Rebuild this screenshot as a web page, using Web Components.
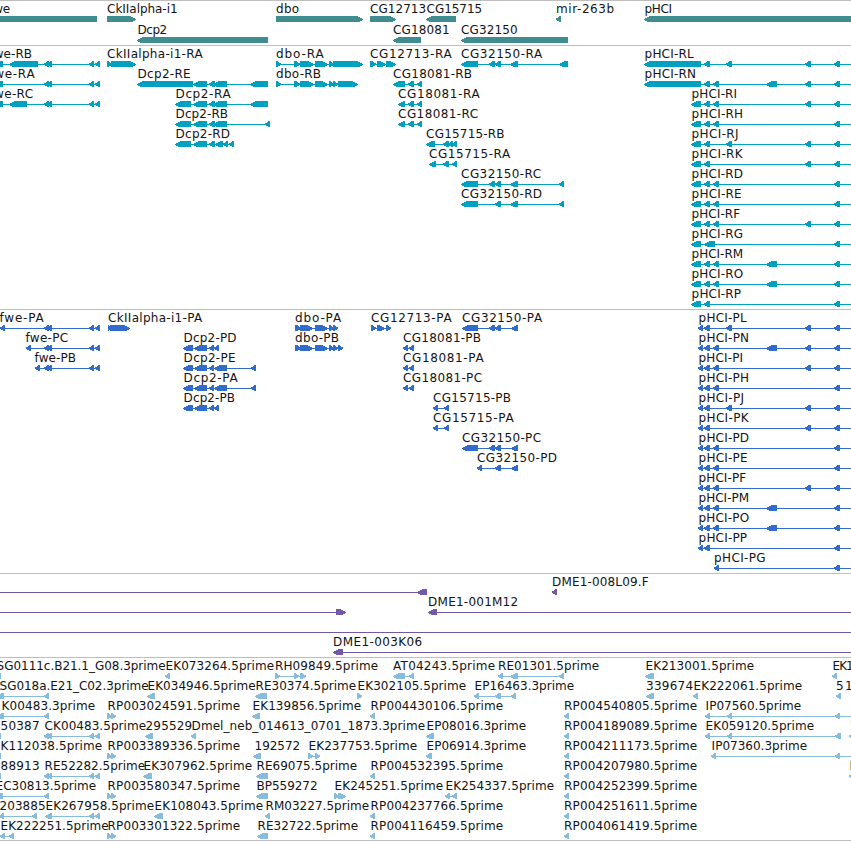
<!DOCTYPE html>
<html lang="en">
<head>
<meta charset="utf-8">
<title>Genome browser</title>
<style>
html,body{margin:0;background:#fff}
body{overflow:hidden}
</style>
</head>
<body>
<genome-view></genome-view>
<script>
// Feature: label|label start|label end|direction + exon spans; "~n" extends the intron line to n.
const CK = '<44-49 47-52 89-94 95-100';
const TRACKS = [
{color:'#408d91', pitch:21, pad:2, rows:[
 'fwe|-10|9.5|<-20-97;CkIIalpha-i1|107.5|177|>107-136;dbo|276.5|298.5|>276-363;CG12713|370.5|425.5|>370-396;CG15715|427|481.5|<426-456;mir-263b|556.5|613.5|<556-561;pHCI|645|671.5|<644-880',
 'Dcp2|138|166.5|<137-268;CG18081|393.5|449|<393-421;CG32150|461.5|517|<461-568']},
{color:'#00a0c0', pitch:20, pad:3, rows:[
 'fwe-RB|-10|31.5|<-5-3 9-38 44-49 47-52 89-94 95-100;CkIIalpha-i1-RA|107.5|202|>107-112 111-136;dbo-RA|276.5|323|>276-281 294-300 300-314 315-328 329-334 333-363;CG12713-RA|370.5|451|>370-376 377-386 386-396;CG32150-RA|461.5|541.5|<461-478 489-495 495-501 510-518 559-568;pHCI-RL|645|693|<644-701 704-710 726-732 805-811 834-840 ~860',
 'fwe-RA|-10|34|<-5-3 44-49 47-52 89-94 95-100;Dcp2-RE|138|190|<137-193 193-207 209-215 213-227 250-268;dbo-RB|276.5|320.5|>276-281 294-300 300-314 315-328 329-334 333-338 338-358;CG18081-RB|393.5|471.5|<393-405 408-414 417-422;pHCI-RN|645|695.5|<644-701 704-710 713-719 766-777 805-811 834-840 ~860',
 'fwe-RC|-10|32.5|<-5-3 9-27 44-49 47-52 89-94 95-100;Dcp2-RA|176|230|<175-191 193-207 209-215 213-227 250-268;CG18081-RA|398.5|479|<398-405 408-414 417-422;pHCI-RI|692|736.5|<691-701 704-710 713-719 805-811 834-840 ~860',
 'Dcp2-RB|176|227.5|<175-191 193-207 209-215 213-227 265-270;CG18081-RC|398.5|477.5|<398-405 408-414 417-422;pHCI-RH|692|742.5|<691-701 704-710 713-719 834-840 ~860',
 'Dcp2-RD|176|229.5|<175-191 193-207 209-215 215-223 223-228 229-234;CG15715-RB|426.5|504|<426-435 443-449 448-453 452-457;pHCI-RJ|692|738|<691-701 704-710 726-732 805-811 834-840 ~860',
 'CG15715-RA|429.5|509.5|<429-436 443-449 452-457;pHCI-RK|692|742|<691-701 704-710 805-811 834-840 ~860',
 'CG32150-RC|461.5|540.5|<461-478 489-495 495-501 510-518 559-564;pHCI-RD|692|742.5|<691-701 704-710 713-719 834-840 ~860',
 'CG32150-RD|461.5|541.5|<461-478 495-501 510-518 559-564;pHCI-RE|692|741|<691-701 704-710 713-719 834-840 ~860',
 'pHCI-RF|692|739.5|<691-701 704-710 713-719 805-811 834-840 ~860',
 'pHCI-RG|692|742.5|<691-701 704-715 834-840 ~860',
 'pHCI-RM|692|742.5|<691-701 704-710 713-719 766-777 834-840 ~860',
 'pHCI-RO|692|742.5|<691-701 704-710 713-719 766-777 834-840 ~860',
 'pHCI-RP|692|740.5|<691-701 704-710 834-840 ~860']},
{color:'#316ccc', pitch:20, pad:3, rows:[
 'fwe-PA|0|43|<0-5 44-49 47-52 89-94 95-100;CkIIalpha-i1-PA|108.5|201.5|>108-112 110-130;dbo-PA|295.5|340.5|>295-301 300-313 315-328 329-334 333-338;CG12713-PA|371.5|451|>371-376 377-385 386-391;CG32150-PA|462.5|541.5|<462-478 489-495 495-501 511-518;pHCI-PL|699|746|<698-703 704-710 726-732 805-811 834-840 ~860',
 'fwe-PC|26|67.5|<26-31 44-49 47-52 89-94 95-100;Dcp2-PD|184|236|<183-193 194-207 209-214 214-219;dbo-PB|295.5|338.5|>295-301 300-313 315-328 329-334 333-338 338-343;CG18081-PB|403.5|480.5|<403-408 409-414;pHCI-PN|699|748.5|<698-703 704-710 713-719 766-777 805-811 834-840 ~860',
 'fwe-PB|35|75.5|<35-40 44-49 47-52 89-94 95-100;Dcp2-PE|184|235|<183-193 194-207 209-214 214-227 251-256;CG18081-PA|403.5|483|<403-408 409-414;pHCI-PI|699|742.5|<698-703 704-710 713-719 805-811 834-840 ~860',
 'Dcp2-PA|184|237|<183-193 194-207 209-214 214-227 251-256;CG18081-PC|403.5|481.5|<403-408 409-414;pHCI-PH|699|748.5|<698-703 704-710 713-719 834-840 ~860',
 'Dcp2-PB|184|234.5|<183-193 194-207 209-214 214-219;CG15715-PB|433.5|510.5|<433-438 444-449;pHCI-PJ|699|743.5|<698-703 704-710 726-732 805-811 834-840 ~860',
 'CG15715-PA|433.5|513|<433-438 444-449;pHCI-PK|699|748|<698-703 704-710 805-811 834-840 ~860',
 'CG32150-PC|462.5|540.5|<462-478 489-495 495-501 511-518;pHCI-PD|699|748.5|<698-703 704-710 713-719 834-840 ~860',
 'CG32150-PD|477.5|556.5|<477-482 495-501 511-518;pHCI-PE|699|747|<698-703 704-710 713-719 834-840 ~860',
 'pHCI-PF|699|745.5|<698-703 704-710 713-719 805-811 834-840 ~860',
 'pHCI-PM|699|748.5|<698-703 704-710 713-719 766-777 834-840 ~860',
 'pHCI-PO|699|748.5|<698-703 704-710 713-719 766-777 834-840 ~860',
 'pHCI-PP|699|746.5|<698-703 704-710 834-840 ~860',
 'pHCI-PG|714.5|765|<714-719 834-840 ~860']},
{color:'#7458a8', pitch:20, pad:3, rows:[
 '|||<-20--10 417-427;DME1-008L09.F|552.5|648|<552-557',
 '|||>-20--10 336-346;DME1-001M12|428.5|517.5|<428-437 ~860',
 '|||<-20--10 ~860',
 'DME1-003K06|333.5|421.5|<333-343 ~860']},
{color:'#87bcdc', pitch:20, pad:2, rows:[
 'SG0111c.B21.1_G08.3prime|-3|165|<-9-1;EK073264.5prime|166|273.5|<165-170;RH09849.5prime|275.5|377.5|>275-280 294-299 300-306;AT04243.5prime|393.5|494.5|<393-405 409-414;RE01301.5prime|498.5|598.5|<498-503 510-518 559-564;EK213001.5prime|646|753.5|<645-654;EK1|833|853|<832-837',
 'SG018a.E21_C02.3prime|0|148|<-4-4 44-49;EK034946.5prime|148|255|<147-155;RE30374.5prime|256|355.5|<255-267;EK302105.5prime|358|465.5|>357-362;EP16463.3prime|475|573.5|<474-479 495-501 511-516;339674|646.5|692.5|<646-654;EK222061.5prime|694|801.5|<693-698;51|836.5|852|<836-841',
 'K00483.3prime|2|94.5|<-4-4 44-49;RP003024591.5prime|108|239.5|>107-112 111-116;EK139856.5prime|253|360.5|<252-260;RP004430106.5prime|371|502.5|<370-375;RP004540805.5prime|564.5|696.5|<564-569;IP07560.5prime|706|800.5|<705-710 727-732 835-840 ~860',
 '50387|1|39|<-9-1;CK00483.5prime|45|145.5|'+CK+';295529|146|191.5|<145-153;Dmel_neb_014613_0701_1873.3prime|192|424.5|<191-196;EP08016.3prime|427|525.5|<426-434;RP004189089.5prime|564.5|696.5|<564-569;EK059120.5prime|706|813.5|<705-710 727-732 835-841;1|850|856|<849-854',
 'K112038.5prime|1|101.5|<-9-1;RP003389336.5prime|108|239.5|>107-112 111-116;192572|255|299.5|<253-261;EK237753.5prime|309|416.5|>308-313 315-320;EP06914.3prime|427|525.5|<426-432;RP004211173.5prime|564.5|696.5|<564-569;IP07360.3prime|712|806.5|<711-716 835-840 ~860',
 '88913|1|39|<-9-1;RE52282.5prime|45|144.5|'+CK+';EK307962.5prime|144|251.5|<143-152;RE69075.5prime|257|356.5|<256-268;RP004532395.5prime|371|502.5|<370-375;RP004207980.5prime|564.5|696.5|<564-569;E|850|856|<849-854',
 'EC30813.5prime|-4|95.5|<-5-3 44-49;RP003580347.5prime|108|239.5|>107-112 111-116;BP559272|257|317|<256-268;EK245251.5prime|335|442.5|>334-339 338-346;EK254337.5prime|446|553.5|<445-450 452-457;RP004252399.5prime|564.5|696.5|<564-569',
 '203885|0|45|<-1-4 32-37;EK267958.5prime|46|153.5|<45-52 89-94 95-100;EK108043.5prime|155|262.5|<154-163;RM03227.5prime|266|368.5|<265-270;RP004237766.5prime|371|502.5|<370-375;RP004251611.5prime|564.5|696.5|<564-569',
 'EK222251.5prime|1|108|<0-5 9-14;RP003301322.5prime|108|239.5|>107-112 111-116;RE32722.5prime|258|357.5|<257-268;RP004116459.5prime|371|502.5|<370-375;RP004061419.5prime|564.5|696.5|<564-569']}
];

class FeatureRow extends HTMLElement {
  set features(line) {
    const root = this.shadowRoot || this.attachShadow({mode:'open'});
    let glyphs = '', labels = '';
    for (const f of line.split(';')) {
      const [label, a, b, spec] = f.split('|');
      const left = spec[0] === '<';
      const parts = spec.slice(1).split(' ');
      let min = 9999, max = -9999;
      for (const p of parts) {
        if (p[0] === '~') { max = +p.slice(1); continue; }
        const [, s, e] = p.match(/^(-?\d+)-(-?\d+)$/).map(Number);
        min = Math.min(min, s); max = Math.max(max, e);
        // Stepped arrowhead, six pixel rows tall.
        const cut = e - s < 7 ? [3,2,0,0,1,3] : [5,3,1,0,1,3];
        cut.forEach((c, i) => {
          c = Math.min(c, e - s - 1);
          glyphs += `<rect x="${left ? s + c : s}" y="${15 + i}" width="${e - s - c}" height="1"/>`;
        });
      }
      glyphs += `<rect x="${min}" y="18" width="${max - min}" height="1"/>`;
      if (label) labels += `<text x="${+a - 0.4}" y="12" textLength="${b - a + 1}" lengthAdjust="spacing">${label}</text>`;
    }
    root.innerHTML = `<style>
      :host{display:block;height:var(--pitch)}
      svg{display:block;width:100%;height:100%;overflow:visible}
      g{fill:var(--glyph);shape-rendering:crispEdges}
      text{fill:#141414;font:12px "DejaVu Sans",sans-serif}
    </style><svg><g>${glyphs}</g>${labels}</svg>`;
  }
}
customElements.define('feature-row', FeatureRow);

class GenomeTrack extends HTMLElement {
  constructor() {
    super();
    this.attachShadow({mode:'open'}).innerHTML = `<style>
      :host{display:flex;flex-direction:column;border-top:1px solid #bebebe}
    </style><slot></slot>`;
  }
}
customElements.define('genome-track', GenomeTrack);

class GenomeView extends HTMLElement {
  connectedCallback() {
    const root = this.attachShadow({mode:'open'});
    root.innerHTML = `<style>
      :host{display:block;width:851px;height:840px;overflow:hidden;background:#fff;border-bottom:1px solid #bebebe}
    </style>`;
    for (const t of TRACKS) {
      const track = document.createElement('genome-track');
      track.style.cssText = `--pitch:${t.pitch}px;--glyph:${t.color};padding-bottom:${t.pad}px`;
      for (const line of t.rows) {
        const row = document.createElement('feature-row');
        row.features = line;
        track.append(row);
      }
      root.append(track);
    }
  }
}
customElements.define('genome-view', GenomeView);
</script>
</body>
</html>
